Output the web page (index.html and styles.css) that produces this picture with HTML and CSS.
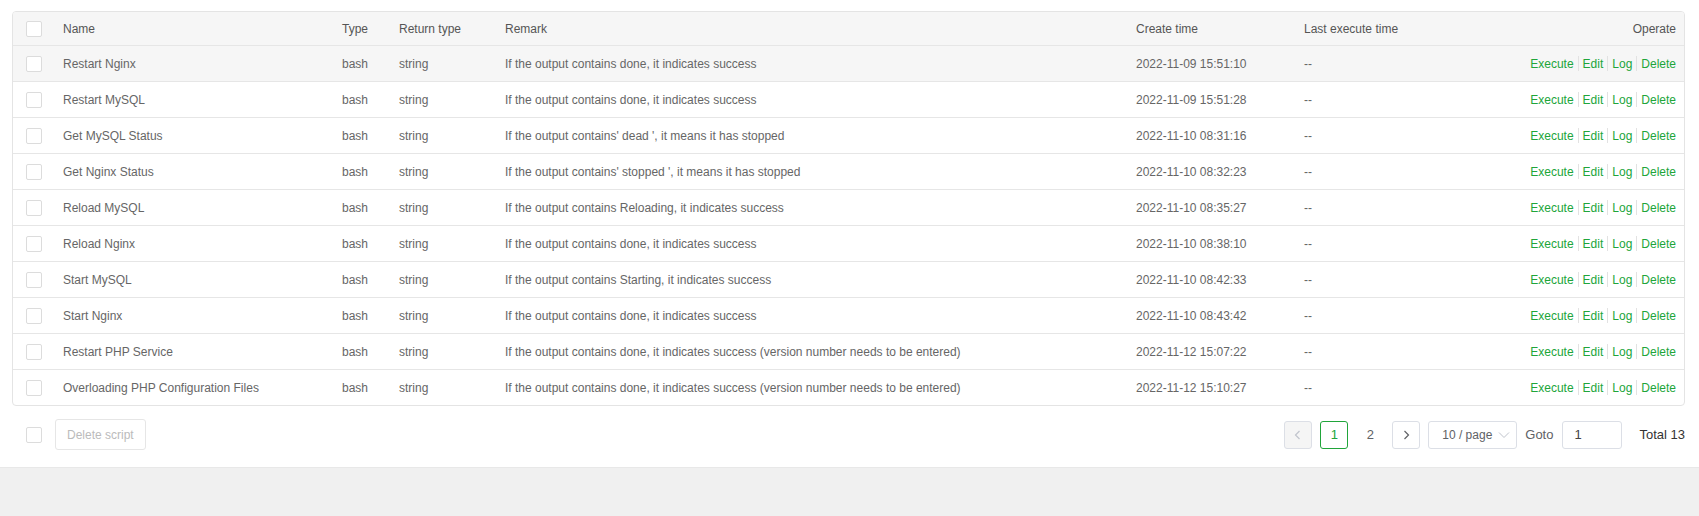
FILE: index.html
```html
<!DOCTYPE html>
<html lang="en">
<head>
<meta charset="utf-8">
<title>Scripts</title>
<link rel="stylesheet" href="styles.css">
</head>
<body>
<div class="panel">
  <table class="grid">
    <colgroup>
      <col class="w-check"><col class="w-name"><col class="w-type"><col class="w-ret"><col class="w-remark"><col class="w-create"><col class="w-last"><col class="w-op">
    </colgroup>
    <thead>
      <tr>
        <th class="c-check"><span class="cb"></span></th>
        <th>Name</th><th>Type</th><th>Return type</th><th>Remark</th><th>Create time</th><th>Last execute time</th><th class="op">Operate</th>
      </tr>
    </thead>
    <tbody>
      <tr class="hover">
        <td class="c-check"><span class="cb"></span></td>
        <td>Restart Nginx</td><td>bash</td><td>string</td><td>If the output contains done, it indicates success</td><td>2022-11-09 15:51:10</td><td>--</td>
        <td class="op"><a href="#">Execute</a><span class="sep"></span><a href="#">Edit</a><span class="sep"></span><a href="#">Log</a><span class="sep"></span><a href="#">Delete</a></td>
      </tr>
      <tr>
        <td class="c-check"><span class="cb"></span></td>
        <td>Restart MySQL</td><td>bash</td><td>string</td><td>If the output contains done, it indicates success</td><td>2022-11-09 15:51:28</td><td>--</td>
        <td class="op"><a href="#">Execute</a><span class="sep"></span><a href="#">Edit</a><span class="sep"></span><a href="#">Log</a><span class="sep"></span><a href="#">Delete</a></td>
      </tr>
      <tr>
        <td class="c-check"><span class="cb"></span></td>
        <td>Get MySQL Status</td><td>bash</td><td>string</td><td>If the output contains' dead ', it means it has stopped</td><td>2022-11-10 08:31:16</td><td>--</td>
        <td class="op"><a href="#">Execute</a><span class="sep"></span><a href="#">Edit</a><span class="sep"></span><a href="#">Log</a><span class="sep"></span><a href="#">Delete</a></td>
      </tr>
      <tr>
        <td class="c-check"><span class="cb"></span></td>
        <td>Get Nginx Status</td><td>bash</td><td>string</td><td>If the output contains' stopped ', it means it has stopped</td><td>2022-11-10 08:32:23</td><td>--</td>
        <td class="op"><a href="#">Execute</a><span class="sep"></span><a href="#">Edit</a><span class="sep"></span><a href="#">Log</a><span class="sep"></span><a href="#">Delete</a></td>
      </tr>
      <tr>
        <td class="c-check"><span class="cb"></span></td>
        <td>Reload MySQL</td><td>bash</td><td>string</td><td>If the output contains Reloading, it indicates success</td><td>2022-11-10 08:35:27</td><td>--</td>
        <td class="op"><a href="#">Execute</a><span class="sep"></span><a href="#">Edit</a><span class="sep"></span><a href="#">Log</a><span class="sep"></span><a href="#">Delete</a></td>
      </tr>
      <tr>
        <td class="c-check"><span class="cb"></span></td>
        <td>Reload Nginx</td><td>bash</td><td>string</td><td>If the output contains done, it indicates success</td><td>2022-11-10 08:38:10</td><td>--</td>
        <td class="op"><a href="#">Execute</a><span class="sep"></span><a href="#">Edit</a><span class="sep"></span><a href="#">Log</a><span class="sep"></span><a href="#">Delete</a></td>
      </tr>
      <tr>
        <td class="c-check"><span class="cb"></span></td>
        <td>Start MySQL</td><td>bash</td><td>string</td><td>If the output contains Starting, it indicates success</td><td>2022-11-10 08:42:33</td><td>--</td>
        <td class="op"><a href="#">Execute</a><span class="sep"></span><a href="#">Edit</a><span class="sep"></span><a href="#">Log</a><span class="sep"></span><a href="#">Delete</a></td>
      </tr>
      <tr>
        <td class="c-check"><span class="cb"></span></td>
        <td>Start Nginx</td><td>bash</td><td>string</td><td>If the output contains done, it indicates success</td><td>2022-11-10 08:43:42</td><td>--</td>
        <td class="op"><a href="#">Execute</a><span class="sep"></span><a href="#">Edit</a><span class="sep"></span><a href="#">Log</a><span class="sep"></span><a href="#">Delete</a></td>
      </tr>
      <tr>
        <td class="c-check"><span class="cb"></span></td>
        <td>Restart PHP Service</td><td>bash</td><td>string</td><td>If the output contains done, it indicates success (version number needs to be entered)</td><td>2022-11-12 15:07:22</td><td>--</td>
        <td class="op"><a href="#">Execute</a><span class="sep"></span><a href="#">Edit</a><span class="sep"></span><a href="#">Log</a><span class="sep"></span><a href="#">Delete</a></td>
      </tr>
      <tr>
        <td class="c-check"><span class="cb"></span></td>
        <td>Overloading PHP Configuration Files</td><td>bash</td><td>string</td><td>If the output contains done, it indicates success (version number needs to be entered)</td><td>2022-11-12 15:10:27</td><td>--</td>
        <td class="op"><a href="#">Execute</a><span class="sep"></span><a href="#">Edit</a><span class="sep"></span><a href="#">Log</a><span class="sep"></span><a href="#">Delete</a></td>
      </tr>
    </tbody>
  </table>

  <div class="footer">
    <div class="batch">
      <span class="cb"></span>
      <button class="btn-disabled" type="button">Delete script</button>
    </div>
    <div class="pager">
      <button class="pg-btn pg-disabled" type="button"><svg width="12" height="12" viewBox="0 0 12 12"><polyline points="7.5,2 3.5,6 7.5,10" fill="none" stroke="currentColor" stroke-width="1.2"/></svg></button>
      <span class="pg-num pg-active">1</span>
      <span class="pg-num">2</span>
      <button class="pg-btn" type="button"><svg width="12" height="12" viewBox="0 0 12 12"><polyline points="4.5,2 8.5,6 4.5,10" fill="none" stroke="currentColor" stroke-width="1.2"/></svg></button>
      <div class="pg-select"><span>10 / page</span><svg width="12" height="8" viewBox="0 0 12 8"><polyline points="1,1.5 6,6.5 11,1.5" fill="none" stroke="currentColor" stroke-width="1"/></svg></div>
      <span class="pg-goto">Goto</span>
      <div class="pg-input">1</div>
      <span class="pg-total">Total 13</span>
    </div>
  </div>
</div>
</body>
</html>
```
FILE: styles.css
```css
* { box-sizing: border-box; }
html, body { margin: 0; padding: 0; }
body {
  background: #f0f0f0;
  font-family: "Liberation Sans", Arial, sans-serif;
  font-size: 12px;
  color: #666;
}
.panel {
  background: #fff;
  padding: 11px 14px 17px 12px;
  border-bottom: 1px solid #e8e8e8;
}
.grid {
  width: 100%;
  table-layout: fixed;
  border-collapse: separate;
  border-spacing: 0;
  border: 1px solid #e4e4e4;
  border-radius: 4px;
  overflow: hidden;
}
.w-check { width: 40px; }
.w-name { width: 279px; }
.w-type { width: 57px; }
.w-ret { width: 106px; }
.w-remark { width: 631px; }
.w-create { width: 168px; }
.w-last { width: 200px; }
.grid th, .grid td {
  padding: 0 10px;
  text-align: left;
  font-weight: normal;
  white-space: nowrap;
  overflow: hidden;
  border-bottom: 1px solid #e6e6e6;
  vertical-align: middle;
}
.grid th {
  height: 34px;
  background: #f6f6f6;
  color: #555;
}
.grid td { height: 36px; }
.grid tbody tr:last-child td { border-bottom: 0; height: 35px; }
.grid tr.hover td { background: #f6f6f6; }
.grid .c-check { padding: 0 0 0 13px; }
.grid .op { text-align: right; padding-right: 8px; }
.cb {
  display: block;
  width: 16px;
  height: 16px;
  border: 1px solid #dcdcdc;
  border-radius: 2px;
  background: #fff;
}
.op a {
  color: #20a53a;
  text-decoration: none;
  vertical-align: middle;
}
.sep {
  display: inline-block;
  width: 1px;
  height: 15px;
  background: #e2e2e2;
  margin: 0 4px;
  vertical-align: middle;
}
.footer {
  display: flex;
  justify-content: space-between;
  align-items: center;
  margin-top: 13px;
  height: 31px;
}
.batch {
  display: flex;
  align-items: center;
  gap: 13px;
  padding-left: 14px;
}
.btn-disabled {
  height: 31px;
  padding: 0 11px;
  border: 1px solid #e6e6e6;
  border-radius: 3px;
  background: #fff;
  color: #bbb;
  font-family: inherit;
  font-size: 12px;
}
.pager {
  display: flex;
  align-items: center;
  color: #606266;
  font-size: 13px;
}
.pg-btn, .pg-num {
  width: 28px;
  height: 28px;
  display: flex;
  align-items: center;
  justify-content: center;
  border-radius: 3px;
  margin-right: 8px;
  font-family: inherit;
  font-size: 13px;
}
.pg-btn {
  border: 1px solid #dcdfe6;
  background: #fff;
  color: #606266;
  padding: 0;
}
.pg-disabled { background: #f5f5f5; color: #c0c4cc; }
.pg-num { color: #606266; }
.pg-active { border: 1px solid #20a53a; color: #20a53a; }
.pg-select {
  width: 89px;
  height: 28px;
  border: 1px solid #dcdfe6;
  border-radius: 3px;
  display: flex;
  align-items: center;
  justify-content: space-between;
  padding: 0 6px 0 13px;
  font-size: 12px;
  color: #606266;
  margin-right: 8px;
}
.pg-select svg { color: #c0c4cc; }
.pg-goto { margin-right: 9px; }
.pg-input {
  width: 60px;
  height: 28px;
  border: 1px solid #dcdfe6;
  border-radius: 3px;
  display: flex;
  align-items: center;
  padding-left: 11px;
  color: #444;
  margin-right: 17px;
}
.pg-total { color: #333; }
```
